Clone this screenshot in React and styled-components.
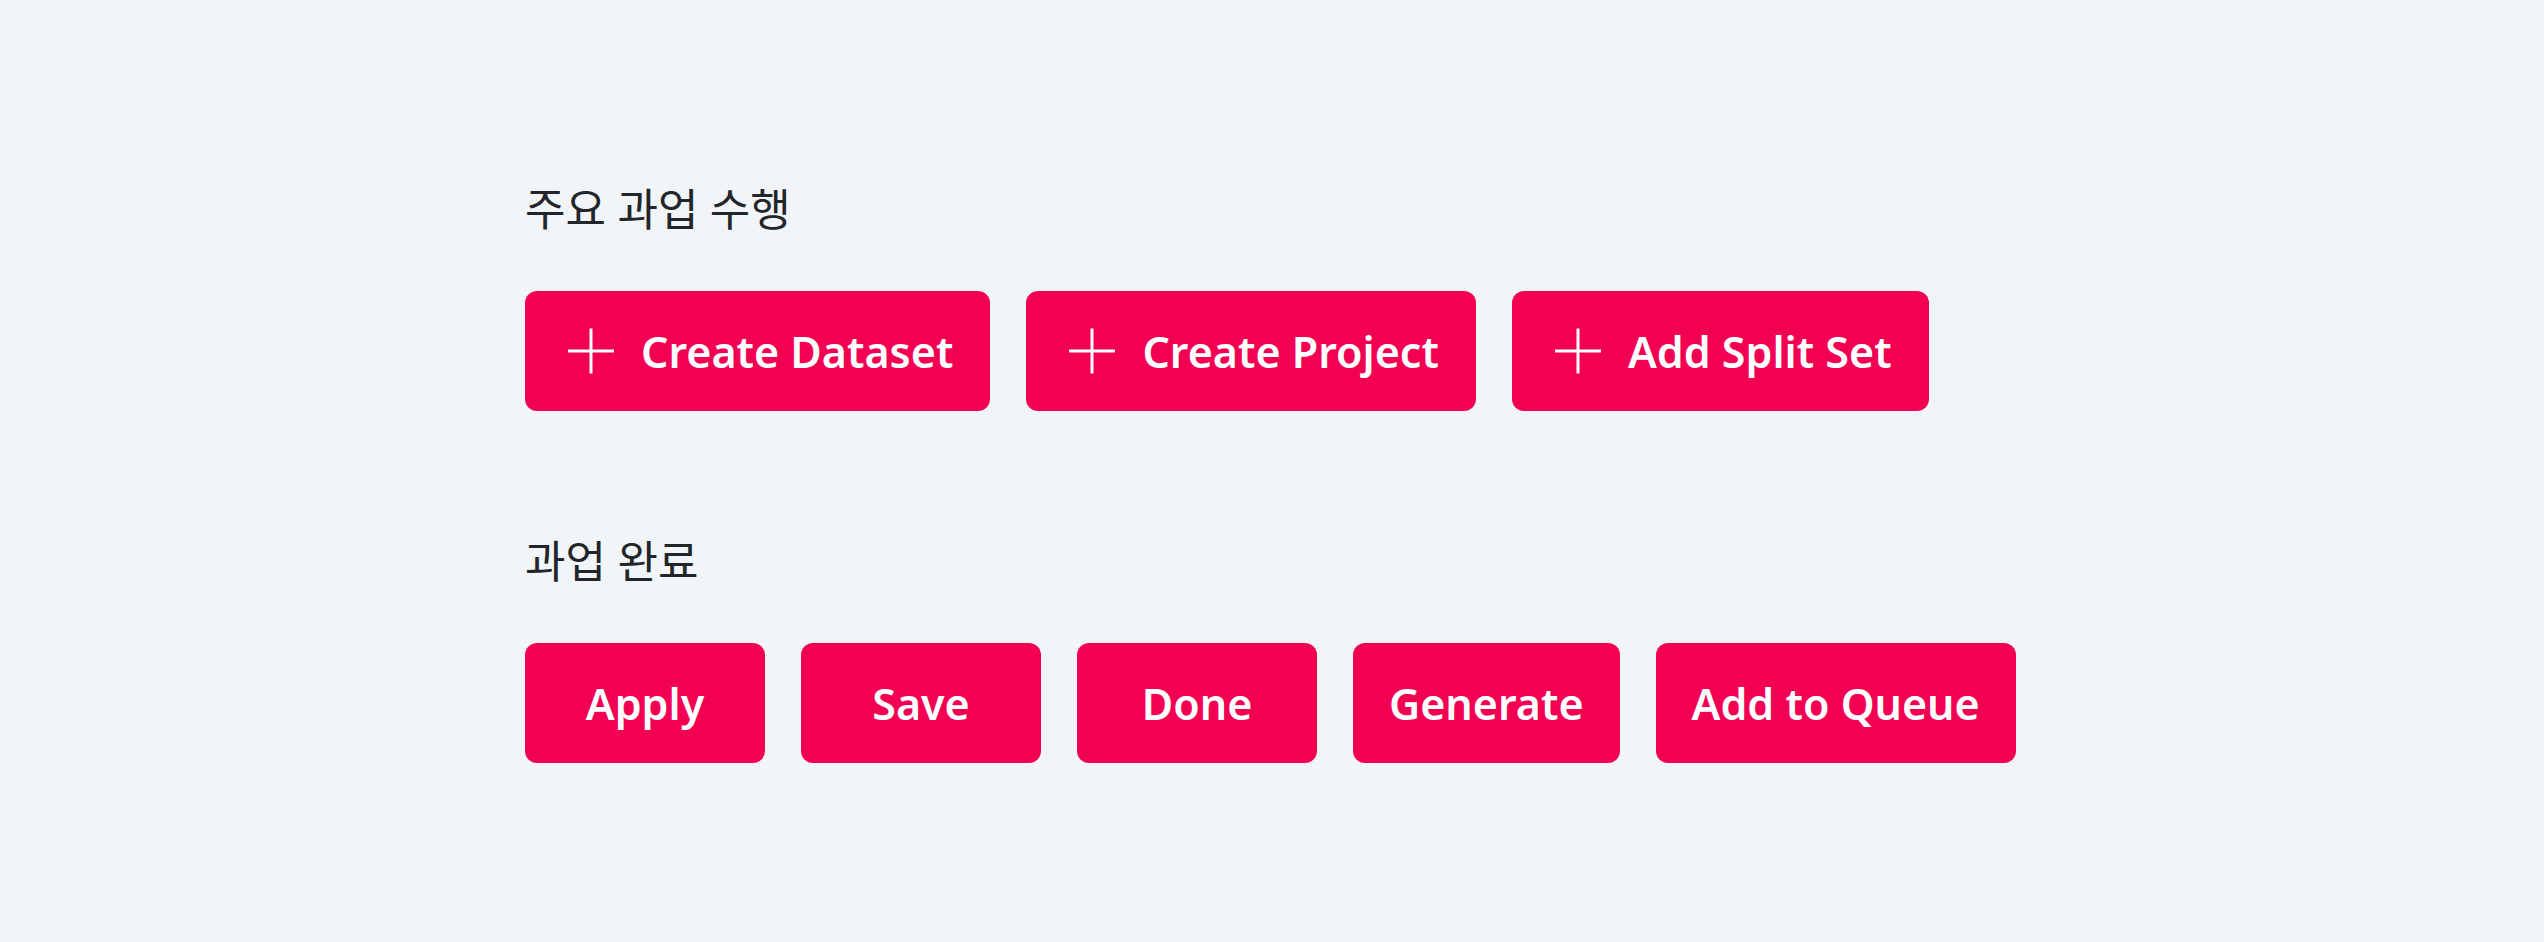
import React from "react";
import styled, { createGlobalStyle } from "styled-components";

const GlobalStyle = createGlobalStyle`
  html, body {
    margin: 0;
    padding: 0;
    background-color: #f2f5f8;
  }
  body {
    font-family: "Noto Sans", "Noto Sans CJK KR", sans-serif;
  }
`;

const Page = styled.div`
  min-height: 942px;
  box-sizing: border-box;
  padding: 183px 0 0 525px;
  display: flex;
  flex-direction: column;
  gap: 124px;
`;

const Section = styled.section`
  display: flex;
  flex-direction: column;
  gap: 55px;
`;

const Title = styled.h2`
  margin: 0;
  color: #222529;
  font-family: "Noto Sans", "Noto Sans CJK KR", sans-serif;
  font-size: 44px;
  font-weight: 400;
  line-height: 53px;
`;

const ButtonRow = styled.div`
  display: flex;
  align-items: center;
  gap: 36px;
`;

const Button = styled.button`
  height: 120px;
  min-width: 240px;
  box-sizing: border-box;
  padding: ${({ $icon }) => ($icon ? "0 37px 0 40px" : "0 36px")};
  display: flex;
  align-items: center;
  justify-content: center;
  gap: 24px;
  border: none;
  border-radius: 12px;
  background-color: #f20052;
  color: #fff;
  font-family: "Noto Sans", "Noto Sans CJK KR", sans-serif;
  font-size: 43px;
  font-weight: 600;
  line-height: 1;
  white-space: nowrap;
  cursor: pointer;
`;

const PlusIcon = () => (
  <svg width="52" height="52" viewBox="0 0 52 52" fill="none">
    <path d="M26 3.5V48.5M3 26H49" stroke="#fff" strokeWidth="3" />
  </svg>
);

const createActions = ["Create Dataset", "Create Project", "Add Split Set"];
const doneActions = ["Apply", "Save", "Done", "Generate", "Add to Queue"];

function App() {
  return (
    <>
      <GlobalStyle />
      <Page>
        <Section>
          <Title>주요 과업 수행</Title>
          <ButtonRow>
            {createActions.map((label) => (
              <Button key={label} $icon>
                <PlusIcon />
                <span>{label}</span>
              </Button>
            ))}
          </ButtonRow>
        </Section>
        <Section>
          <Title>과업 완료</Title>
          <ButtonRow>
            {doneActions.map((label) => (
              <Button key={label}>{label}</Button>
            ))}
          </ButtonRow>
        </Section>
      </Page>
    </>
  );
}

export default App;
